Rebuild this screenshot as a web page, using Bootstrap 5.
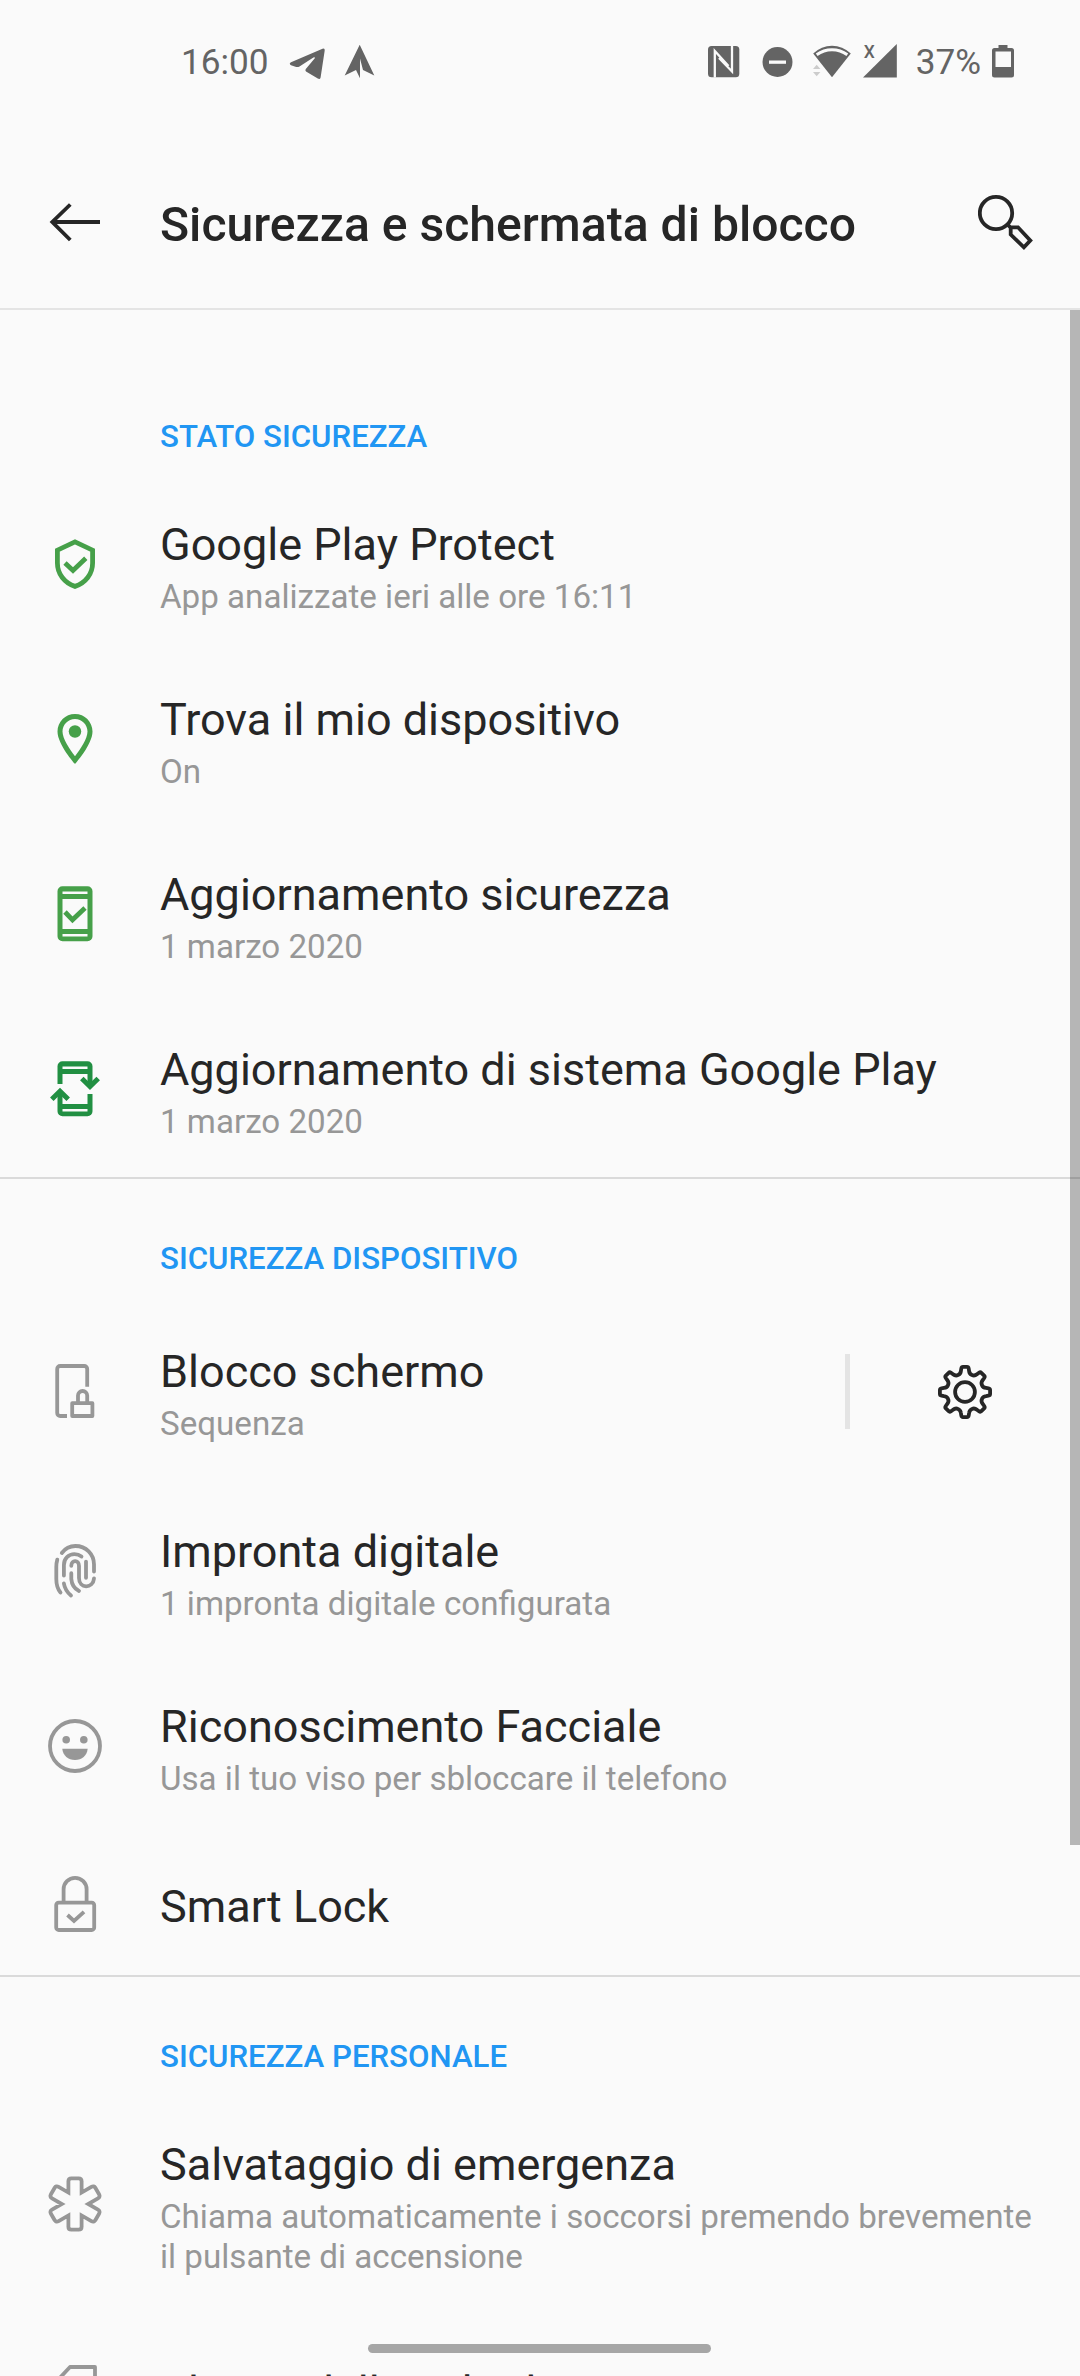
<!DOCTYPE html>
<html lang="it">
<head>
<meta charset="utf-8">
<meta name="viewport" content="width=device-width, initial-scale=1">
<title>Sicurezza e schermata di blocco</title>
<link href="https://cdn.jsdelivr.net/npm/bootstrap@5.3.0/dist/css/bootstrap.min.css" rel="stylesheet">
<style>
body{background:#fafafa;color:#262626;font-family:Roboto,"Noto Sans",sans-serif;}
.screen{width:1080px;height:2376px;}
.statusbar{height:124px;padding:43px 66px 0 181px;color:#646464;font-size:35.2px;line-height:38px;}
.statusbar svg{display:block;flex:none;fill:#646464;}
.appbar{height:186px;border-bottom:2px solid #e4e4e4;}
.appbar svg{display:block;flex:none;fill:none;stroke:#262626;stroke-width:3.8;}
.appbar h1{font-size:48.1px;line-height:56px;font-weight:500;width:818px;margin:73px 0 0;white-space:nowrap;}
.pref-group{border-bottom:2px solid #dadada;}
.group-label{color:#2196f3;font-size:31.2px;font-weight:500;line-height:36px;padding-left:160px;margin:0;}
.label-first{height:167px;padding-top:109px;}
.label-next{height:120px;padding-top:62px;}
.pref{height:175px;}
.pref-lock{height:185px;}
.pref-single{height:141px;}
.pref-tall{height:223px;}
.pref-icon{width:160px;flex:none;padding:57px 0 0 45px;}
.pref-lock .pref-icon{padding-top:62px;}
.pref-single .pref-icon{padding-top:40px;}
.pref-tall .pref-icon{padding-top:77px;}
.pref-icon svg{display:block;width:60px;height:60px;}
.pref-text{padding-top:41px;white-space:nowrap;}
.pref-lock .pref-text{padding-top:46px;}
.pref-single .pref-text{padding-top:46px;}
.pref-name{font-size:45px;line-height:53px;}
.pref-note{font-size:33.150px;line-height:40px;color:#979797;margin-top:6px;}
.ic-green{fill:#46a049;stroke:none;}
.ic-deep{fill:#218f42;stroke:none;}
.ic-line{fill:none;stroke:#979797;stroke-width:3.8;}
.side-rule{width:5px;height:75px;background:#e4e4e4;margin:55px 90px 0 0;}
.gear{width:60px;height:60px;margin:63px 85px 0 0;fill:none;stroke:#262626;stroke-width:3.8;}
.scrollbar-thumb{top:310px;right:0;width:10px;height:1535px;background:rgba(0,0,0,.27);}
.home-pill{left:368px;top:2344px;width:343px;height:9px;border-radius:5px;background:#a6a6a6;}
</style>
<script src="https://cdn.jsdelivr.net/npm/bootstrap@5.3.0/dist/js/bootstrap.bundle.min.js"></script>
</head>
<body>
<div class="screen position-relative overflow-hidden">
  <div class="statusbar d-flex align-items-start justify-content-between">
    <div class="d-flex">
      <span>16:00</span>
      <svg width="90" height="40" viewBox="286 43 90 40" style="margin-left:18px"><path d="M290 62.2 L321.5 48.8 Q324 48 323.7 50.6 L319.6 77.5 Q319 79.8 316.8 78.6 L305 71.4 Q303.800 70.300 304.800 69 L314 58 Q313.800 56.800 312.400 57.500 L298.500 66.500 Q296.500 67.500 294.500 66.700 L290 65.300 Q287.500 63.800 290 62.200Z"/><path d="M358.700 44.700 L373.300 75.500 L362 70 L359 58.500 V78.300 L355 70 L343.700 75.500Z"/></svg>
    </div>
    <div class="d-flex">
      <svg width="32" height="40" viewBox="708 43 32 40"><rect x="708" y="46" width="31.300" height="31.300" rx="3.500"/><path d="M714.800 77.500V51L728.500 66M732 45.500V71.500L719 58" fill="none" stroke="#fafafa" stroke-width="2.300"/></svg>
      <svg width="31" height="40" viewBox="762 43 31 40" style="margin-left:22px"><circle cx="777.500" cy="62" r="15"/><path d="M769 60.500h17v3.300h-17z" fill="#fafafa"/></svg>
      <svg width="39" height="40" viewBox="813 43 39 40" style="margin-left:20px"><path d="M832 77.300 L813.200 53.500 Q821.500 45.700 832 45.700 T850.800 53.500Z"/><path d="M816.700 54.800 Q823.500 49.800 832 49.800 T847.300 54.800" fill="none" stroke="#fafafa" stroke-width="3"/><path d="M813 69l3.700-4.300 3.700 4.300zM813 72l3.700 4.300 3.700-4.300z" fill="#ccc"/></svg>
      <svg width="34" height="40" viewBox="863 43 34 40" style="margin-left:11px"><path d="M863 77.500 L896.800 44V77.500Z"/><text x="863.800" y="57.800" font-size="17.500" font-family="Roboto" font-weight="500">X</text></svg>
      <span style="margin-left:19px">37%</span>
      <svg width="22" height="40" viewBox="992 43 22 40" style="margin-left:11px"><path fill-rule="evenodd" d="M998.500 45h9v3h4a2.500 2.500 0 0 1 2.500 2.500v24.500a2.500 2.500 0 0 1-2.500 2.500h-17a2.500 2.500 0 0 1-2.500-2.500v-24.500a2.500 2.500 0 0 1 2.500-2.500h4zM995.500 51.500V67h15.500V51.500z"/></svg>
    </div>
  </div>

  <header class="appbar d-flex">
    <svg width="160" height="184" viewBox="0 124 160 184"><path d="M70.300 204.500 L52.300 222 L70.300 240M52 222H100"/></svg>
    <h1>Sicurezza e schermata di blocco</h1>
    <svg width="102" height="184" viewBox="978 124 102 184"><circle cx="996" cy="213" r="16.200"/><path d="M1007.500 224.500 L1010.700 227.700M1010.700 227.300H1018L1030.300 240.500 L1023.900 247.300 L1010.700 234.500Z"/></svg>
  </header>

  <main>
    <section class="pref-group">
      <h2 class="group-label label-first">STATO SICUREZZA</h2>
      <div class="pref d-flex">
        <div class="pref-icon"><svg viewBox="0 0 60 60" fill="none" stroke="#46a049" stroke-width="4.800"><path d="M30 7.800 L47.600 16.200V29C47.600 40 40.500 49 30 52.400C19.500 49 12.400 40 12.400 29V16.200Z"/><path d="M20 29 L28 36.500 L40.800 24.300"/></svg></div>
        <div class="pref-text"><div class="pref-name">Google Play Protect</div><div class="pref-note">App analizzate ieri alle ore 16:11</div></div>
      </div>
      <div class="pref d-flex">
        <div class="pref-icon"><svg viewBox="0 0 24 24" class="ic-green"><path d="M12 2C8.130 2 5 5.130 5 9c0 5.250 7 13 7 13s7-7.750 7-13c0-3.870-3.130-7-7-7zM7 9c0-2.760 2.240-5 5-5s5 2.240 5 5c0 2.880-2.880 7.190-5 9.880C9.920 16.210 7 11.850 7 9z"/><circle cx="12" cy="9" r="2.500"/></svg></div>
        <div class="pref-text"><div class="pref-name">Trova il mio dispositivo</div><div class="pref-note">On</div></div>
      </div>
      <div class="pref d-flex">
        <div class="pref-icon"><svg viewBox="0 0 60 60" class="ic-green"><path fill-rule="evenodd" d="M17.500 2.200h25a5 5 0 0 1 5 5v45a5 5 0 0 1-5 5h-25a5 5 0 0 1-5-5v-45a5 5 0 0 1 5-5zM17.500 7.500V10h25V7.500zM17.500 15v30h25V15zM17.500 50v2.500h25V50z"/><path d="M20 28 L27.500 35.800 L40 24" fill="none" stroke="#46a049" stroke-width="4.800"/></svg></div>
        <div class="pref-text"><div class="pref-name">Aggiornamento sicurezza</div><div class="pref-note">1 marzo 2020</div></div>
      </div>
      <div class="pref d-flex">
        <div class="pref-icon"><svg viewBox="0 0 60 60" class="ic-deep"><path fill-rule="evenodd" d="M12.500 25V7.200a5 5 0 0 1 5-5h25a5 5 0 0 1 5 5V27h-5V15h-25v10zM17.500 7.500V10h25V7.500z"/><path fill-rule="evenodd" d="M47.500 35v17.300a5 5 0 0 1-5 5h-25a5 5 0 0 1-5-5V33h5v12h25V35zM17.500 50v2.500h25V50z"/><path d="M36.800 19.500 L45 27.500 L53.200 19.500M6.800 40.300 L15 32.300 L23.200 40.300" fill="none" stroke="#218f42" stroke-width="5"/></svg></div>
        <div class="pref-text"><div class="pref-name">Aggiornamento di sistema Google Play</div><div class="pref-note">1 marzo 2020</div></div>
      </div>
    </section>

    <section class="pref-group">
      <h2 class="group-label label-next">SICUREZZA DISPOSITIVO</h2>
      <div class="pref pref-lock d-flex">
        <div class="pref-icon"><svg viewBox="0 0 60 60" class="ic-line"><path d="M22 55H15.200a3 3 0 0 1-3-3V8a3 3 0 0 1 3-3H39.200a3 3 0 0 1 3 3V25.700"/><path d="M27.200 42.200H47.400V55H27.200ZM33 42V34.600a4.600 4.600 0 0 1 9.200 0V42" stroke-linejoin="round"/></svg></div>
        <div class="pref-text flex-grow-1"><div class="pref-name">Blocco schermo</div><div class="pref-note">Sequenza</div></div>
        <div class="side-rule"></div>
        <svg class="gear d-block" style="margin-left:-5px" viewBox="-30 -30 60 60"><circle r="9.900"/><path id="gearline" stroke-linejoin="round"/></svg>
      </div>
      <div class="pref d-flex">
        <div class="pref-icon"><svg viewBox="0 0 60 60" class="ic-line" stroke-linecap="round"><path d="M16.800 12C20 7.700 24.500 5 30.400 5C41 5 49 13 49 23.500V30.500"/><path d="M12.300 18.600Q11.300 22 11.300 26V38Q11.300 46.500 15.500 51.500"/><path d="M18.900 34.500V24C18.900 17.500 23.500 13.200 29.500 13.200Q33.500 13.200 36.500 15.500"/><path d="M18.900 42.500Q20 49.500 26 54.500"/><path d="M26.300 24.800C26.300 18.500 34 18.500 34 25V37C34 48 48 48 49 37.500"/><path d="M41 20.700V36.800"/><path d="M26.300 32.200V38Q27 46.500 34 50"/></svg></div>
        <div class="pref-text"><div class="pref-name">Impronta digitale</div><div class="pref-note">1 impronta digitale configurata</div></div>
      </div>
      <div class="pref d-flex">
        <div class="pref-icon"><svg viewBox="0 0 60 60" class="ic-line"><circle cx="30" cy="30" r="25"/><g fill="#979797" stroke="none"><circle cx="21.200" cy="23.700" r="3.800"/><circle cx="38.800" cy="23.700" r="3.800"/><path d="M17.300 32.700H42.700C42 39.500 37 44 30 44S18 39.500 17.300 32.700Z"/></g></svg></div>
        <div class="pref-text"><div class="pref-name">Riconoscimento Facciale</div><div class="pref-note">Usa il tuo viso per sbloccare il telefono</div></div>
      </div>
      <div class="pref pref-single d-flex">
        <div class="pref-icon"><svg viewBox="0 0 60 60" class="ic-line"><rect x="11.200" y="28.600" width="38" height="27.400" rx="2.500"/><path d="M18.600 28V15.300a11.500 11.500 0 0 1 23 0V28M22.500 41 L29 47 L39 37.800"/></svg></div>
        <div class="pref-text"><div class="pref-name">Smart Lock</div></div>
      </div>
    </section>

    <section>
      <h2 class="group-label label-next">SICUREZZA PERSONALE</h2>
      <div class="pref pref-tall d-flex">
        <div class="pref-icon"><svg viewBox="-30 -30 60 60" class="ic-line"><path id="starline" stroke-linejoin="miter"/></svg></div>
        <div class="pref-text"><div class="pref-name">Salvataggio di emergenza</div><div class="pref-note">Chiama automaticamente i soccorsi premendo brevemente<br>il pulsante di accensione</div></div>
      </div>
      <div class="pref pref-single d-flex">
        <div class="pref-icon"><svg viewBox="0 0 60 60" class="ic-line"><path d="M50 7V55H11V22L25 7Z" stroke-linejoin="round"/></svg></div>
        <div class="pref-text"><div class="pref-name">Blocco della scheda SIM</div></div>
      </div>
    </section>
  </main>
  <div class="scrollbar-thumb position-absolute"></div>
  <div class="home-pill position-absolute"></div>
</div>
<script>
// Build a closed outline by repeating one arm around the origin.
function radial(count, arm) {
  let d = "";
  for (let k = 0; k < count; k++) {
    const a = k * 2 * Math.PI / count, c = Math.cos(a), s = Math.sin(a);
    for (const [cmd, ...p] of arm) {
      if (cmd === "M" && k > 0) continue;
      let out = cmd;
      for (let i = 0; i < p.length; i += 2)
        out += (p[i] * c - p[i + 1] * s).toFixed(2) + " " + (p[i] * s + p[i + 1] * c).toFixed(2) + " ";
      d += out;
    }
  }
  return d + "Z";
}
// The first point of each later arm is joined by a line from the previous one.
document.getElementById("gearline").setAttribute("d", radial(8, [
  ["M", -7, -16.9], ["C", -5.200, -17.600, -4.300, -18.800, -4.100, -21], ["L", -3.700, -23.500],
  ["Q", -3.400, -25.100, -2, -25.100], ["L", 2, -25.100], ["Q", 3.400, -25.100, 3.700, -23.500],
  ["L", 4.100, -21], ["C", 4.300, -18.800, 5.200, -17.600, 7, -16.9]
]));
document.getElementById("starline").setAttribute("d", radial(6, [
  ["M", -6.600, -11.430], ["L", -6.600, -22.700], ["Q", -6.600, -25.700, -3.600, -25.700],
  ["L", 3.600, -25.700], ["Q", 6.600, -25.700, 6.600, -22.700], ["L", 6.600, -11.430]
]));
</script>
</body>
</html>
